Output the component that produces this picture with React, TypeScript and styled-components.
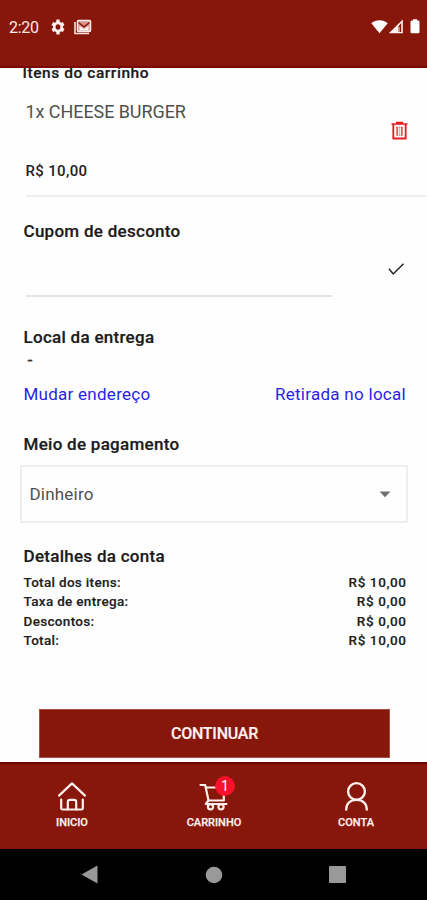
import React from "react";
import styled, { createGlobalStyle } from "styled-components";

const Global = createGlobalStyle`
  * { box-sizing: border-box; }
  body { margin: 0; background: #fff; font-family: Roboto, "Liberation Sans", sans-serif; }
  svg { display: block; }
`;

const Screen = styled.div`
  width: 427px;
  height: 900px;
  display: flex;
  flex-direction: column;
  overflow: hidden;
  background: #fefefe;
`;

const StatusBar = styled.header`
  flex: none;
  height: 68px;
  padding: 18px 7px 0 9px;
  display: flex;
  align-items: flex-start;
  background: #86170a;
  border-bottom: 2px solid #780804;
  color: #fbe9e6;
`;

const Clock = styled.span`
  width: 41px;
  font-size: 16px;
  line-height: 20px;
  letter-spacing: -0.3px;
`;

const StatusIcons = styled.div<{ $end?: boolean }>`
  display: flex;
  margin-left: ${(p) => (p.$end ? "auto" : "0")};
  padding-top: ${(p) => (p.$end ? "1px" : "0")};
`;

const MailSlot = styled.div`
  margin: 1px 0 0 8px;
`;

const BatterySlot = styled.div`
  margin-left: 6px;
`;

const Content = styled.main`
  flex: none;
  height: 694px;
  overflow: hidden;
  display: flex;
  flex-direction: column;
`;

const Heading = styled.h2<{ $size?: number; $track?: number }>`
  margin: 0;
  height: 20px;
  font-size: ${(p) => p.$size ?? 17}px;
  line-height: 20px;
  font-weight: 500;
  color: #1b1b1b;
  -webkit-text-stroke: 0.2px #1b1b1b;
  letter-spacing: ${(p) => p.$track ?? 0.28}px;
  white-space: nowrap;
`;

const CartSection = styled.section`
  height: 128px;
  margin-top: -5px;
  padding-left: 22.5px;
  flex: none;
`;

const CartRow = styled.div`
  display: flex;
  justify-content: space-between;
  height: 114px;
  margin: 0 1.5px 0 3px;
  padding: 19px 17px 0 0;
  border-bottom: 2px solid #efefef;
`;

const Product = styled.div`
  display: flex;
  flex-direction: column;
  gap: 39px;
`;

const ProductName = styled.span`
  font-size: 18px;
  line-height: 20px;
  color: #505050;
  letter-spacing: -0.07px;
`;

const Price = styled.span`
  font-size: 15px;
  line-height: 20px;
  font-weight: 500;
  color: #222;
  letter-spacing: 0.35px;
`;

const DeleteButton = styled.button`
  width: 17px;
  height: 20px;
  margin: 19px 1px 0 0;
  padding: 0;
  border: 0;
  background: none;
`;

const CouponSection = styled.section`
  flex: none;
  height: 106px;
  padding: 30px 22px 0 23.5px;
`;

const CouponRow = styled.div`
  display: flex;
  justify-content: space-between;
  height: 56px;
  margin-left: 2.5px;
`;

const CouponField = styled.div`
  width: 306px;
  border-bottom: 2px solid #e4e4e4;
`;

const ApplyButton = styled.button`
  width: 17px;
  height: 15px;
  margin-top: 21px;
  padding: 0;
  border: 0;
  background: none;
`;

const DeliverySection = styled.section`
  flex: none;
  height: 107px;
  padding: 30px 21px 0 23.5px;
`;

const Address = styled.p`
  margin: 0 0 0 4px;
  height: 27px;
  font-size: 18px;
  line-height: 25px;
  color: #333;
  -webkit-text-stroke: 0.2px #333;
`;

const LinkRow = styled.div`
  display: flex;
  justify-content: space-between;
  margin-top: 10px;
`;

const ActionLink = styled.a<{ $track: number }>`
  font-size: 17px;
  line-height: 20px;
  color: #2a1fe8;
  letter-spacing: ${(p) => p.$track}px;
`;

const PaymentSection = styled.section`
  flex: none;
  height: 88px;
  padding: 30px 19px 0 20px;
`;

const PaymentHeading = styled(Heading)`
  margin-left: 3.5px;
`;

const Select = styled.div`
  display: flex;
  align-items: center;
  justify-content: space-between;
  height: 58px;
  margin-top: 11px;
  padding: 0 15px 0 7.5px;
  border: 2px solid #eeeeee;
  border-radius: 2px;
  font-size: 17px;
  letter-spacing: 0.2px;
  color: #505050;
`;

const SummarySection = styled.section`
  flex: none;
  padding: 54px 21px 0 23.5px;
`;

const SummaryList = styled.div`
  margin-top: 7px;
`;

const SummaryRow = styled.div`
  display: flex;
  justify-content: space-between;
  font-size: 13.5px;
  line-height: 19.4px;
  font-weight: 500;
  color: #202020;
  -webkit-text-stroke: 0.15px #202020;
`;

const SummaryLabel = styled.span`
  letter-spacing: 0.32px;
`;

const SummaryValue = styled.span`
  letter-spacing: 0.6px;
  margin-right: -0.6px;
`;

const ContinueButton = styled.button`
  flex: none;
  width: 351px;
  height: 49px;
  margin: auto 0 4px 39px;
  padding: 1px 0 0;
  border: 1px solid #a34e47;
  background: #86170a;
  color: #fff0ee;
  font: 500 16px/20px Roboto, sans-serif;
  letter-spacing: -0.25px;
  -webkit-text-stroke: 0.2px #fff0ee;
`;

const TabBar = styled.nav`
  flex: none;
  height: 87px;
  display: grid;
  grid-template-columns: repeat(3, 1fr);
  padding-left: 1px;
  background: #86170a;
  border-top: 2px solid #6d0404;
`;

const Tab = styled.div`
  display: flex;
  flex-direction: column;
  align-items: center;
  padding-top: 17px;
  gap: 4px;
`;

const TabIcon = styled.div`
  position: relative;
  height: 31px;
`;

const TabLabel = styled.span`
  font-size: 11px;
  line-height: 14px;
  font-weight: 500;
  color: #fff0ee;
  -webkit-text-stroke: 0.25px #fff0ee;
`;

const Badge = styled.span`
  position: absolute;
  left: 16px;
  top: -5px;
  width: 20px;
  height: 20px;
  border-radius: 50%;
  background: #f5122a;
  color: #fff;
  font-size: 14px;
  line-height: 21px;
  text-align: center;
`;

const SystemBar = styled.footer`
  flex: none;
  height: 51px;
  display: grid;
  grid-template-columns: 91px 1fr 91px;
  padding: 0 44px;
  place-items: center;
  background: #000;
`;

const GearIcon = () => (
  <svg width="16" height="18" viewBox="0 0 24 24" preserveAspectRatio="none" fill="#fff0ee">
    <path d="M19.4 13c.1-.6.1-1.4 0-2l2.3-1.8-2.4-4-2.7 1.1a8 8 0 0 0-1.8-1L14.300 2h-4.600l-.5 3.300a8 8 0 0 0-1.800 1L4.700 5.200l-2.400 4L4.600 11a8 8 0 0 0 0 2l-2.300 1.800 2.400 4 2.700-1.100a8 8 0 0 0 1.800 1l.5 3.300h4.600l.5-3.300a8 8 0 0 0 1.800-1l2.700 1.100 2.400-4zM12 15.600a3.600 3.600 0 1 1 0-7.200 3.600 3.600 0 0 1 0 7.200z" fillRule="evenodd" />
  </svg>
);

const MailStackIcon = () => (
  <svg width="18" height="16" viewBox="0 0 18 16" fill="none">
    <rect x="3.500" y="1.500" width="13" height="11" rx="1" fill="#d9958c" stroke="#fff0ee" strokeWidth="1.500" />
    <path d="M1 3v11.500h14" stroke="#fbe0dc" strokeWidth="1.600" />
    <path d="M4.500 3.500 10 7.800l5.500-4.300" stroke="#86170a" strokeWidth="1.500" />
    <path d="M5.500 11.500V7l4.500 3 4.500-3v4.500z" fill="#fff0ee" />
  </svg>
);

const WifiIcon = () => (
  <svg width="17" height="16" viewBox="0 0 17 16">
    <path d="M.3 4.300C4.500.100 12.500.100 16.700 4.300L8.500 14.300z" fill="#fff" />
  </svg>
);

const SignalIcon = () => (
  <svg width="16" height="16" viewBox="0 0 16 16">
    <path d="M14.800.500V14.300H.800z" fill="#fff3f0" />
    <path d="M10.600 7.300 13.200 4v9h-2.600z" fill="#86170a" />
    <path d="M11.500 8v5" stroke="#e7b9b3" strokeWidth=".7" />
  </svg>
);

const BatteryIcon = () => (
  <svg width="10" height="16" viewBox="0 0 10 16">
    <path d="M3 .200h4v1.300h1.300q1.200 0 1.200 1.200v10.300q0 1.200-1.200 1.200H1.700Q.5 14.200.5 13V2.700q0-1.200 1.200-1.200H3z" fill="#fff" />
  </svg>
);

const TrashIcon = () => (
  <svg width="17" height="20" viewBox="0 0 17 20" fill="none" stroke="#ea1a20">
    <path d="M.500 3h16M5 1.500h7" strokeWidth="1.700" />
    <path d="M2.300 3v14.500h12.400V3" strokeWidth="1.800" strokeLinejoin="round" />
    <path d="M6.200 6v8.500M10.800 6v8.500" strokeWidth="1.800" opacity=".75" />
    <path d="M5.300 6h6.400M5.300 14.300h6.400M8.500 6v8.500" strokeWidth=".8" opacity=".45" />
  </svg>
);

const CheckIcon = () => (
  <svg width="17" height="15" viewBox="0 0 17 15" fill="none" stroke="#222" strokeWidth="1.500">
    <path d="M1 6.800 5.200 12 15.500 1.800" />
  </svg>
);

const HomeIcon = () => (
  <svg width="30" height="31" viewBox="0 0 30 31" fill="none" stroke="#fff0ee" strokeWidth="2.200" strokeLinejoin="round" strokeLinecap="round">
    <path d="M2 14.600 15 2.400l13 12.200" />
    <path d="M4.200 18.500v8.700q0 1.300 1.300 1.300h5.300v-7.600q0-2 2-2h4.400q2 0 2 2v7.600h5.300q1.300 0 1.300-1.300v-8.700" />
    <path d="M11 28.500h8" />
  </svg>
);

const CartIcon = () => (
  <svg width="30" height="31" viewBox="0 0 30 31" fill="none" stroke="#fff0ee" strokeWidth="2.200" strokeLinejoin="round" strokeLinecap="round">
    <path d="M1.500 4h4.700l3.300 15.500h15.300V14.300M6.700 6.500H18" />
    <path d="M9.500 19.500 6.800 23h20.700" />
    <circle cx="11.500" cy="25.800" r="2.600" />
    <circle cx="22" cy="25.800" r="2.600" />
  </svg>
);

const UserIcon = () => (
  <svg width="30" height="31" viewBox="0 0 30 31" fill="none" stroke="#fff0ee" strokeWidth="2.400" strokeLinecap="round">
    <circle cx="15.500" cy="10.500" r="8.400" />
    <path d="M5.200 28.600C5.400 22.500 9.500 18.900 15.500 18.900S25.600 22.500 25.800 28.600" />
  </svg>
);

const totals = [
  { label: "Total dos itens:", value: "R$ 10,00" },
  { label: "Taxa de entrega:", value: "R$ 0,00" },
  { label: "Descontos:", value: "R$ 0,00" },
  { label: "Total:", value: "R$ 10,00" },
];

export default function App() {
  return (
    <Screen>
      <Global />
      <StatusBar>
        <Clock>2:20</Clock>
        <StatusIcons>
          <GearIcon />
          <MailSlot>
            <MailStackIcon />
          </MailSlot>
        </StatusIcons>
        <StatusIcons $end>
          <WifiIcon />
          <SignalIcon />
          <BatterySlot>
            <BatteryIcon />
          </BatterySlot>
        </StatusIcons>
      </StatusBar>

      <Content>
        <CartSection>
          <Heading $size={15.5} $track={0.56}>Itens do carrinho</Heading>
          <CartRow>
            <Product>
              <ProductName>1x CHEESE BURGER</ProductName>
              <Price>R$ 10,00</Price>
            </Product>
            <DeleteButton aria-label="Remover item">
              <TrashIcon />
            </DeleteButton>
          </CartRow>
        </CartSection>

        <CouponSection>
          <Heading>Cupom de desconto</Heading>
          <CouponRow>
            <CouponField />
            <ApplyButton aria-label="Aplicar cupom">
              <CheckIcon />
            </ApplyButton>
          </CouponRow>
        </CouponSection>

        <DeliverySection>
          <Heading>Local da entrega</Heading>
          <Address>-</Address>
          <LinkRow>
            <ActionLink $track={0.26}>Mudar endereço</ActionLink>
            <ActionLink $track={0.28}>Retirada no local</ActionLink>
          </LinkRow>
        </DeliverySection>

        <PaymentSection>
          <PaymentHeading>Meio de pagamento</PaymentHeading>
          <Select>
            <span>Dinheiro</span>
            <svg width="12" height="7" viewBox="0 0 12 7">
              <path d="M.500.500h11L6 6.300z" fill="#707070" />
            </svg>
          </Select>
        </PaymentSection>

        <SummarySection>
          <Heading>Detalhes da conta</Heading>
          <SummaryList>
            {totals.map((t) => (
              <SummaryRow key={t.label}>
                <SummaryLabel>{t.label}</SummaryLabel>
                <SummaryValue>{t.value}</SummaryValue>
              </SummaryRow>
            ))}
          </SummaryList>
        </SummarySection>

        <ContinueButton>CONTINUAR</ContinueButton>
      </Content>

      <TabBar>
        <Tab>
          <TabIcon><HomeIcon /></TabIcon>
          <TabLabel>INICIO</TabLabel>
        </Tab>
        <Tab>
          <TabIcon>
            <CartIcon />
            <Badge>1</Badge>
          </TabIcon>
          <TabLabel>CARRINHO</TabLabel>
        </Tab>
        <Tab>
          <TabIcon><UserIcon /></TabIcon>
          <TabLabel>CONTA</TabLabel>
        </Tab>
      </TabBar>

      <SystemBar>
        <svg width="17" height="19" viewBox="0 0 17 19"><path d="M.500 9.500 16.500.500v18z" fill="#999" /></svg>
        <svg width="18" height="18" viewBox="0 0 18 18"><circle cx="9" cy="9" r="8.300" fill="#999" /></svg>
        <svg width="18" height="17" viewBox="0 0 18 17"><rect width="17" height="17" rx="1" fill="#999" /></svg>
      </SystemBar>
    </Screen>
  );
}
